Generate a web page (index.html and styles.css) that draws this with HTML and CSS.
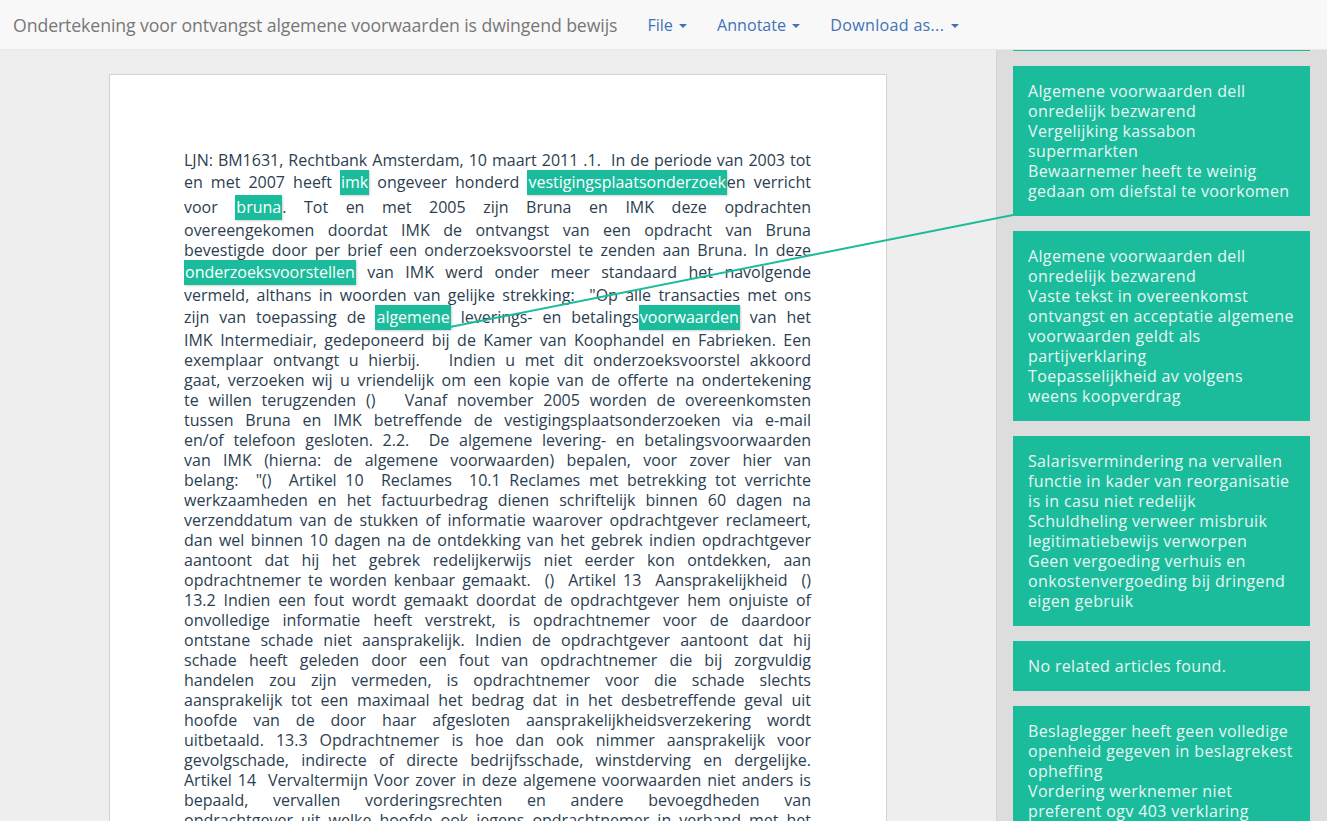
FILE: index.html
```html
<!DOCTYPE html>
<html lang="nl">
<head>
<meta charset="utf-8">
<title>Ondertekening voor ontvangst algemene voorwaarden is dwingend bewijs</title>
<link rel="stylesheet" href="styles.css">
</head>
<body>
<nav class="navbar">
  <span class="brand">Ondertekening voor ontvangst algemene voorwaarden is dwingend bewijs</span>
  <ul class="menu">
    <li><a href="#">File <span class="caret"></span></a></li>
    <li><a href="#">Annotate <span class="caret"></span></a></li>
    <li><a href="#" class="wide">Download as... <span class="caret"></span></a></li>
  </ul>
</nav>
<main class="main">
  <section class="doc-col">
    <article class="page">
      <p class="doc-text">LJN: BM1631, Rechtbank Amsterdam, 10 maart 2011 .1.&nbsp; In de periode van 2003 tot<br>
en met 2007 heeft <span class="hl">imk</span> ongeveer honderd <span class="hl">vestigingsplaatsonderzoek</span>en verricht<br>
voor <span class="hl">bruna</span>. Tot en met 2005 zijn Bruna en IMK deze opdrachten<br>
overeengekomen doordat IMK de ontvangst van een opdracht van Bruna<br>
bevestigde door per brief een onderzoeksvoorstel te zenden aan Bruna. In deze<br>
<span class="hl">onderzoeksvoorstellen</span> van IMK werd onder meer standaard het navolgende<br>
vermeld, althans in woorden van gelijke strekking:&nbsp; "Op alle transacties met ons<br>
zijn van toepassing de <span class="hl">algemene</span> leverings- en betalings<span class="hl">voorwaarden</span> van het<br>
IMK Intermediair, gedeponeerd bij de Kamer van Koophandel en Fabrieken. Een<br>
exemplaar ontvangt u hierbij.&nbsp;&nbsp; Indien u met dit onderzoeksvoorstel akkoord<br>
gaat, verzoeken wij u vriendelijk om een kopie van de offerte na ondertekening<br>
te willen terugzenden ()&nbsp;&nbsp; Vanaf november 2005 worden de overeenkomsten<br>
tussen Bruna en IMK betreffende de vestigingsplaatsonderzoeken via e-mail<br>
en/of telefoon gesloten. 2.2.&nbsp; De algemene levering- en betalingsvoorwaarden<br>
van IMK (hierna: de algemene voorwaarden) bepalen, voor zover hier van<br>
belang:&nbsp; "()&nbsp; Artikel 10&nbsp; Reclames&nbsp; 10.1 Reclames met betrekking tot verrichte<br>
werkzaamheden en het factuurbedrag dienen schriftelijk binnen 60 dagen na<br>
verzenddatum van de stukken of informatie waarover opdrachtgever reclameert,<br>
dan wel binnen 10 dagen na de ontdekking van het gebrek indien opdrachtgever<br>
aantoont dat hij het gebrek redelijkerwijs niet eerder kon ontdekken, aan<br>
opdrachtnemer te worden kenbaar gemaakt.&nbsp; ()&nbsp; Artikel 13&nbsp; Aansprakelijkheid&nbsp; ()<br>
13.2 Indien een fout wordt gemaakt doordat de opdrachtgever hem onjuiste of<br>
onvolledige informatie heeft verstrekt, is opdrachtnemer voor de daardoor<br>
ontstane schade niet aansprakelijk. Indien de opdrachtgever aantoont dat hij<br>
schade heeft geleden door een fout van opdrachtnemer die bij zorgvuldig<br>
handelen zou zijn vermeden, is opdrachtnemer voor die schade slechts<br>
aansprakelijk tot een maximaal het bedrag dat in het desbetreffende geval uit<br>
hoofde van de door haar afgesloten aansprakelijkheidsverzekering wordt<br>
uitbetaald. 13.3 Opdrachtnemer is hoe dan ook nimmer aansprakelijk voor<br>
gevolgschade, indirecte of directe bedrijfsschade, winstderving en dergelijke.<br>
Artikel 14&nbsp; Vervaltermijn Voor zover in deze algemene voorwaarden niet anders is<br>
bepaald, vervallen vorderingsrechten en andere bevoegdheden van<br>
opdrachtgever uit welke hoofde ook jegens opdrachtnemer in verband met het<br>
verrichten van werkzaamheden door opdrachtnemer vervallen binnen een jaar</p>
    </article>
  </section>
  <aside class="sidebar">
    <div class="card card-edge"></div>
    <div class="card">
      <div>Algemene voorwaarden dell<br>onredelijk bezwarend</div>
      <div>Vergelijking kassabon<br>supermarkten</div>
      <div>Bewaarnemer heeft te weinig<br>gedaan om diefstal te voorkomen</div>
    </div>
    <div class="card">
      <div>Algemene voorwaarden dell<br>onredelijk bezwarend</div>
      <div>Vaste tekst in overeenkomst<br>ontvangst en acceptatie algemene<br>voorwaarden geldt als<br>partijverklaring</div>
      <div>Toepasselijkheid av volgens<br>weens koopverdrag</div>
    </div>
    <div class="card">
      <div>Salarisvermindering na vervallen<br>functie in kader van reorganisatie<br>is in casu niet redelijk</div>
      <div>Schuldheling verweer misbruik<br>legitimatiebewijs verworpen</div>
      <div>Geen vergoeding verhuis en<br>onkostenvergoeding bij dringend<br>eigen gebruik</div>
    </div>
    <div class="card">
      <div>No related articles found.</div>
    </div>
    <div class="card">
      <div>Beslaglegger heeft geen volledige<br>openheid gegeven in beslagrekest<br>opheffing</div>
      <div>Vordering werknemer niet<br>preferent ogv 403 verklaring</div>
    </div>
  </aside>
</main>
<svg class="connector" width="1327" height="821" viewBox="0 0 1327 821" aria-hidden="true">
  <line x1="450" y1="327" x2="1013" y2="215" stroke="#1abc9c" stroke-width="2"/>
</svg>
</body>
</html>
```
FILE: styles.css
```css
* { box-sizing: border-box; }

html, body {
  margin: 0;
  height: 100%;
  overflow: hidden;
}

body {
  position: relative;
  font-family: "Open Sans", "Noto Sans", sans-serif;
  font-size: 15px;
  line-height: 20px;
  color: #2c3e50;
  background: #eeeeee;
}

.navbar {
  display: flex;
  align-items: center;
  height: 50px;
  background: #f8f8f8;
  border-bottom: 1px solid #e7e7e7;
  padding-left: 13px;
}

.brand {
  font-size: 17.7px;
  color: #777777;
  padding-right: 15px;
  letter-spacing: -0.1px;
}

.menu {
  display: flex;
  list-style: none;
  margin: 0;
  padding: 0;
}

.menu a {
  display: block;
  padding: 15px;
  font-size: 16.1px;
  color: #4272b5;
  text-decoration: none;
}

.menu a.wide {
  letter-spacing: 0.3px;
}

.caret {
  display: inline-block;
  width: 0;
  height: 0;
  margin-left: 2px;
  vertical-align: middle;
  border-top: 4px solid #4272b5;
  border-left: 4px solid transparent;
  border-right: 4px solid transparent;
}

.main {
  display: flex;
  height: calc(100% - 50px);
}

.doc-col {
  flex: 0 0 996px;
  background: #eeeeee;
  padding-top: 24px;
  overflow: hidden;
}

.page {
  width: 778px;
  margin: 0 auto;
  background: #ffffff;
  border: 1px solid #d2d2d2;
  padding: 75px 75px 75px 74px;
}

.doc-text {
  margin: 0;
  font-size: 16px;
  line-height: 20px;
  text-align: justify;
  text-align-last: justify;
  color: #2c3e50;
}

.hl {
  display: inline-block;
  background: #1abc9c;
  color: #ffffff;
  padding: 2px 1px;
  line-height: 21px;
  box-shadow: 1px 1px 2px rgba(0, 0, 0, 0.18);
}

.sidebar {
  flex: 1;
  background: #dddddd;
  border-left: 1px solid #d4d4d4;
  padding: 0 17px 0 16px;
  overflow: hidden;
}

.card {
  background: #1abc9c;
  color: #e8f6f3;
  padding: 15px;
  margin-bottom: 15px;
  font-size: 16px;
  letter-spacing: 0.35px;
  line-height: 20px;
  white-space: nowrap;
}

.card-edge {
  height: 1px;
  padding: 0;
}

.connector {
  position: absolute;
  left: 0;
  top: 0;
  pointer-events: none;
}
```
